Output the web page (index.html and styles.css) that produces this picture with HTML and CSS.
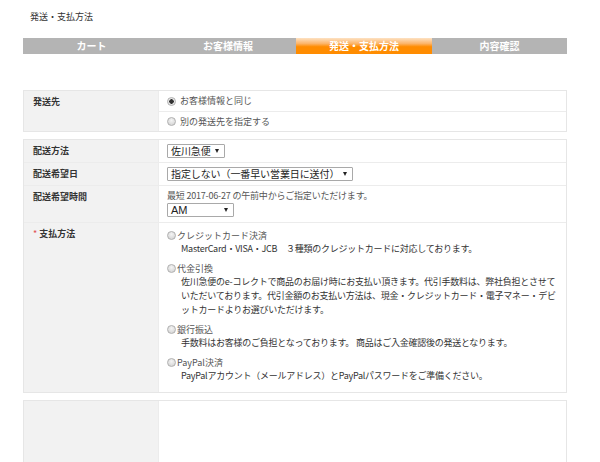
FILE: index.html
```html
<!DOCTYPE html>
<html lang="ja">
<head>
<meta charset="utf-8">
<title>発送・支払方法</title>
<link rel="stylesheet" href="styles.css">
</head>
<body>
<div class="page">
  <h1 class="title">発送・支払方法</h1>
  <ol class="steps">
    <li class="step">カート</li>
    <li class="step">お客様情報</li>
    <li class="step current">発送・支払方法</li>
    <li class="step">内容確認</li>
  </ol>

  <div class="table">
    <div class="row">
      <div class="label">発送先</div>
      <div class="cells">
        <div class="cell"><span class="radio checked"></span>お客様情報と同じ</div>
        <div class="cell"><span class="radio"></span>別の発送先を指定する</div>
      </div>
    </div>
  </div>

  <div class="table">
    <div class="row">
      <div class="label">配送方法</div>
      <div class="value"><span class="select">佐川急便</span></div>
    </div>
    <div class="row">
      <div class="label">配送希望日</div>
      <div class="value"><span class="select">指定しない（一番早い営業日に送付）</span></div>
    </div>
    <div class="row">
      <div class="label">配送希望時間</div>
      <div class="value time">
        <div class="note">最短 2017-06-27 の午前中からご指定いただけます。</div>
        <span class="select w-time latin">AM</span>
      </div>
    </div>
    <div class="row">
      <div class="label"><span class="req">*</span> 支払方法</div>
      <div class="value pay">
        <div class="option">
          <div class="opt-title"><span class="radio"></span>クレジットカード決済</div>
          <div class="opt-desc">MasterCard・VISA・JCB　３種類のクレジットカードに対応しております。</div>
        </div>
        <div class="option">
          <div class="opt-title"><span class="radio"></span>代金引換</div>
          <div class="opt-desc">佐川急便のe-コレクトで商品のお届け時にお支払い頂きます。代引手数料は、弊社負担とさせていただいております。代引金額のお支払い方法は、現金・クレジットカード・電子マネー・デビットカードよりお選びいただけます。</div>
        </div>
        <div class="option">
          <div class="opt-title"><span class="radio"></span>銀行振込</div>
          <div class="opt-desc">手数料はお客様のご負担となっております。 商品はご入金確認後の発送となります。</div>
        </div>
        <div class="option">
          <div class="opt-title"><span class="radio"></span>PayPal決済</div>
          <div class="opt-desc">PayPalアカウント（メールアドレス）とPayPalパスワードをご準備ください。</div>
        </div>
      </div>
    </div>
  </div>

  <div class="table last">
    <div class="row tall">
      <div class="label"></div>
      <div class="value"></div>
    </div>
  </div>
</div>
</body>
</html>
```

FILE: styles.css
```css
* { box-sizing: border-box; }
html, body { margin: 0; padding: 0; background: #fff; }
body {
  font-family: "Noto Sans CJK JP", "Noto Sans", sans-serif;
  font-size: 9px;
  color: #444;
  height: 462px;
  overflow: hidden;
}
.page {
  padding: 10px 33px 0 23px;
}
.title {
  margin: 0 0 14px 7px;
  font-size: 9px;
  font-weight: normal;
  color: #333;
  line-height: 14px;
}
.steps {
  list-style: none;
  margin: 0 0 36px 0;
  padding: 0;
  display: grid;
  grid-template-columns: 137px 136px 136px 135px;
  height: 16px;
}
.step {
  background: #b4b4b4;
  color: #fff;
  font-weight: bold;
  font-size: 10px;
  line-height: 16px;
  text-align: center;
}
.step.current {
  background: linear-gradient(#fde2c4 0%, #fcb468 35%, #ff8c00 55%, #ff8c00 100%);
}
.table {
  border: 1px solid #e6e6e6;
  margin-bottom: 7px;
}
.row {
  display: grid;
  grid-template-columns: 135px 1fr;
  border-top: 1px solid #ececec;
}
.row:first-child { border-top: none; }
.label {
  background: #f2f2f2;
  color: #333;
  font-weight: bold;
  padding: 4px 9px;
  line-height: 13px;
  border-right: 1px solid #ececec;
}
.req { color: #e05050; font-weight: normal; }
.cells .cell {
  height: 20px;
  line-height: 20px;
  padding-left: 8px;
  color: #555;
  display: flex;
  align-items: center;
}
.cells .cell + .cell { border-top: 1px solid #ececec; }
.value {
  padding: 4px 4px 4px 8px;
  min-height: 22px;
}
.radio {
  display: inline-block;
  width: 9px;
  height: 9px;
  border-radius: 50%;
  border: 1px solid #b0b0b0;
  background: radial-gradient(circle at 50% 35%, #f4f4f4, #cfcfcf);
  margin-right: 4px;
  flex: none;
  vertical-align: -1px;
}
.radio.checked {
  background: radial-gradient(circle, #333 0 2px, #e8e8e8 2.5px);
}
.select {
  display: inline-block;
  position: relative;
  height: 14px;
  line-height: 12px;
  border: 1px solid #a9a9a9;
  border-radius: 1px;
  padding: 0 13px 0 3px;
  font-size: 10px;
  letter-spacing: -0.1px;
  color: #222;
  background: #fff;
  white-space: nowrap;
  vertical-align: top;
}
.select::after {
  content: "";
  position: absolute;
  right: 5px;
  top: 4px;
  border-left: 2.5px solid transparent;
  border-right: 2.5px solid transparent;
  border-top: 4px solid #222;
}
.latin { font-family: "Liberation Sans", Arial, sans-serif; font-size: 11px; }
.w-time { width: 67px; }
.time { padding-top: 4px; padding-bottom: 5px; }
.note { line-height: 12px; color: #555; margin-bottom: 1px; letter-spacing: -0.2px; }
.pay { padding: 6px 4px 9px 8px; }
.option { margin-bottom: 6px; }
.option:last-child { margin-bottom: 0; }
.opt-title {
  line-height: 13px;
  color: #555;
  display: flex;
  align-items: center;
}
.opt-title .radio { margin-right: 1px; }
.opt-desc {
  padding-left: 14px;
  line-height: 14px;
  color: #333;
  letter-spacing: -0.25px;
}
.tall .label, .tall .value { height: 70px; }
```
